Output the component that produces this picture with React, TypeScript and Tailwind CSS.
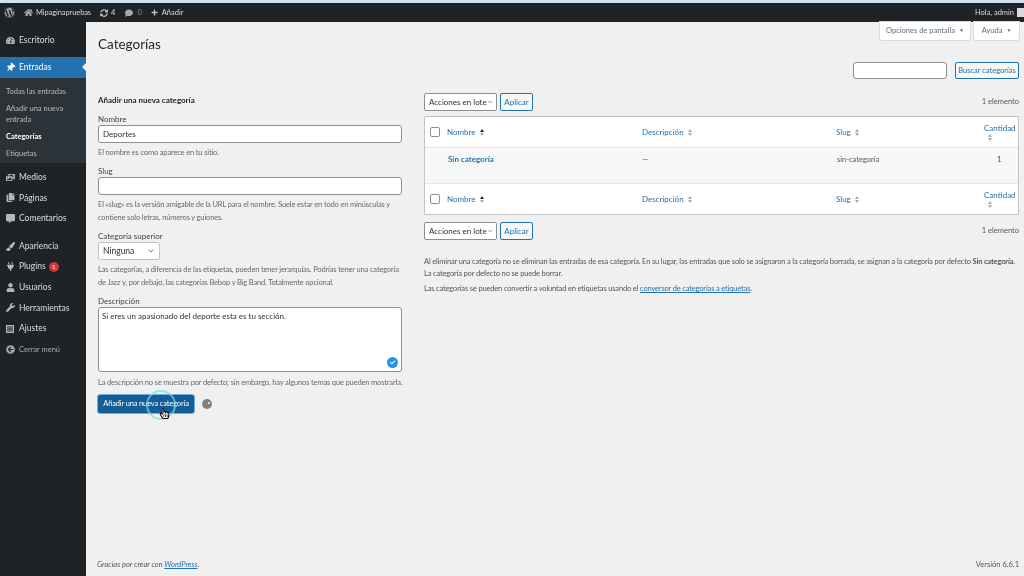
import { FaWordpress, FaHome, FaComment, FaPlus, FaTachometerAlt, FaThumbtack, FaPhotoVideo, FaCopy, FaCommentAlt, FaPaintBrush, FaPlug, FaUser, FaWrench, FaArrowCircleLeft, FaCheck, FaHandPointer, FaRegHandPointer, FaSyncAlt } from "react-icons/fa";
import { ChevronDown } from "lucide-react";
import type { ReactNode } from "react";

function SettingsIcon() {
  return (
    <svg viewBox="0 0 20 20" width="10" height="10" fill="currentColor">
      <path d="M2 2h16v16H2z" />
      <path d="M5 4h2v5H5zM5 12h2v4H5zM9 4h2v3H9zM9 10h2v6H9zM13 4h2v6h-2zM13 13h2v3h-2z" fill="#1d2327" />
      <path d="M4 9.5h4v2H4zM8 7.5h4v2H8zM12 10.5h4v2h-4z" fill="#1d2327" />
    </svg>
  );
}

const menuTop = [{ label: "Escritorio", icon: <FaTachometerAlt /> }];

const menuMiddle = [
  { label: "Medios", icon: <FaPhotoVideo /> },
  { label: "Páginas", icon: <FaCopy /> },
  { label: "Comentarios", icon: <FaCommentAlt /> },
];

const menuBottom = [
  { label: "Apariencia", icon: <FaPaintBrush /> },
  { label: "Plugins", icon: <FaPlug />, badge: "1" },
  { label: "Usuarios", icon: <FaUser /> },
  { label: "Herramientas", icon: <FaWrench /> },
  { label: "Ajustes", icon: <SettingsIcon /> },
];

function MenuItem({ label, icon, badge }: { label: string; icon: ReactNode; badge?: string }) {
  return (
    <div className="flex h-[20.6px] items-center text-[8.5px] text-[#dcdfe2]">
      <span className="flex w-[19px] justify-center pl-[1px] text-[9px] text-[#b4b7ba]">{icon}</span>
      <span>{label}</span>
      {badge && (
        <span className="ml-[3px] flex h-[10px] w-[10px] items-center justify-center rounded-full bg-[#d63638] text-[6px] text-white">
          {badge}
        </span>
      )}
    </div>
  );
}

function Sidebar() {
  return (
    <aside className="flex w-[86px] shrink-0 flex-col bg-[#1d2327] pt-[8.5px]">
      {menuTop.map((m) => (
        <MenuItem key={m.label} {...m} />
      ))}
      <div className="relative mt-[6px] flex h-[21px] items-center bg-[#2271b1] text-[8.5px] text-white">
        <span className="flex w-[19px] justify-center pl-[1px] text-[9px]">
          <FaThumbtack className="rotate-45" />
        </span>
        Entradas
        <span className="absolute right-0 top-[6px] h-0 w-0 border-y-[4px] border-r-[4px] border-y-transparent border-r-[#f0f0f1]" />
      </div>
      <div className="flex h-[85px] flex-col bg-[#2c3338] pl-[6px] pt-[7.5px] text-[7.5px] leading-[11px] text-[#b6babd]">
        <span>Todas las entradas</span>
        <span className="mt-[6px] w-[70px]">Añadir una nueva entrada</span>
        <span className="mt-[6px] font-bold text-white">Categorías</span>
        <span className="mt-[6px]">Etiquetas</span>
      </div>
      <div className="mt-[4px]">
        {menuMiddle.map((m) => (
          <MenuItem key={m.label} {...m} />
        ))}
      </div>
      <div className="mt-[7px]">
        {menuBottom.map((m) => (
          <MenuItem key={m.label} {...m} />
        ))}
      </div>
      <div className="flex h-[21px] items-center text-[7.5px] text-[#a7aaad]">
        <span className="flex w-[19px] justify-center pl-[1px] text-[9px]">
          <FaArrowCircleLeft />
        </span>
        Cerrar menú
      </div>
    </aside>
  );
}

function TopBar() {
  return (
    <header className="flex h-[19px] shrink-0 items-center bg-[#1d2327] text-[7.5px] text-[#d5d8da]">
      <FaWordpress className="ml-[4px] text-[11px] text-[#a7aaad]" />
      <FaHome className="ml-[9px] text-[9px] text-[#a7aaad]" />
      <span className="ml-[3px] tracking-[-0.1px]">Mipaginapruebas</span>
      <FaSyncAlt className="ml-[9px] text-[8px] text-[#c3c4c7]" />
      <span className="ml-[3px]">4</span>
      <FaComment className="ml-[10px] text-[8px] text-[#a7aaad]" />
      <span className="ml-[4px] text-[#8c8f94]">0</span>
      <FaPlus className="ml-[9px] text-[7px] text-[#c3c4c7]" />
      <span className="ml-[4px]">Añadir</span>
      <span className="ml-auto">Hola, admin</span>
      <span className="ml-[3px] h-[9px] w-[7px] bg-[#d8d8d8]" />
    </header>
  );
}

function Field({ label, children, help }: { label: string; children: ReactNode; help: ReactNode }) {
  return (
    <div className="mt-[6.5px] first:mt-0">
      <div className="text-[8px] leading-[12px] text-[#3c434a]">{label}</div>
      {children}
      <p className="mt-[2.5px] text-[7.5px] leading-[13px] tracking-[-0.15px] text-[#646970]">{help}</p>
    </div>
  );
}

function TextInput({ value }: { value?: string }) {
  return (
    <div className="flex h-[18px] items-center rounded-[3px] border border-[#8c8f94] bg-white px-[4px] text-[8px] text-[#2c3338]">
      {value}
    </div>
  );
}

function BulkActions() {
  return (
    <div className="flex items-center">
      <div className="flex h-[18px] w-[73px] items-center justify-between whitespace-nowrap rounded-[2px] border border-[#8c8f94] bg-white pl-[4px] pr-[3px] text-[8px] text-[#2c3338]">
        Acciones en lote
        <ChevronDown size={8} strokeWidth={2} />
      </div>
      <div className="ml-[3px] flex h-[18px] w-[33px] items-center justify-center rounded-[2px] border border-[#2271b1] bg-[#f6f7f7] text-[8px] text-[#2271b1]">
        Aplicar
      </div>
      <span className="ml-auto text-[7.5px] text-[#50575e]">1 elemento</span>
    </div>
  );
}

function SortArrows({ active }: { active?: boolean }) {
  return (
    <span className="ml-[4px] inline-flex flex-col gap-[1px]">
      <span className={`h-0 w-0 border-x-[2.5px] border-b-[3.5px] border-x-transparent ${active ? "border-b-[#1d2327]" : "border-b-[#a7aaad]"}`} />
      <span className="h-0 w-0 border-x-[2.5px] border-t-[3.5px] border-x-transparent border-t-[#a7aaad]" />
    </span>
  );
}

function HeadRow({ border }: { border: string }) {
  return (
    <div className={`grid h-[31px] grid-cols-[217px_194px_143px_1fr] items-center bg-white text-[8px] text-[#2271b1] ${border}`}>
      <div className="flex items-center pl-[5px]">
        <span className="h-[10px] w-[10px] rounded-[2px] border border-[#8c8f94] bg-white" />
        <span className="ml-[7px]">Nombre</span>
        <SortArrows active />
      </div>
      <div className="flex items-center">
        Descripción
        <SortArrows />
      </div>
      <div className="flex items-center">
        Slug
        <SortArrows />
      </div>
      <div className="flex flex-col items-start pl-[5px] leading-[11px]">
        Cantidad
        <SortArrows />
      </div>
    </div>
  );
}

function Table() {
  return (
    <div className="mt-[5px] rounded-[1px] border border-[#c3c4c7] bg-white">
      <HeadRow border="border-b border-[#e4e5e6]" />
      <div className="grid h-[35px] grid-cols-[217px_194px_143px_1fr] bg-[#f6f7f7] pt-[6px] text-[8px] leading-[11px] text-[#50575e]">
        <span className="pl-[23px] font-bold text-[#2271b1]">Sin categoría</span>
        <span>—</span>
        <span className="pl-[1px] text-[7.5px]">sin-categoría</span>
        <span className="pl-[18px]">1</span>
      </div>
      <HeadRow border="border-t border-[#e4e5e6]" />
    </div>
  );
}

function AddForm() {
  return (
    <section className="w-[304px] shrink-0 pt-[4px]">
      <h2 className="text-[8px] font-bold leading-[12px] text-[#1d2327]">Añadir una nueva categoría</h2>
      <div className="mt-[7px]">
        <Field label="Nombre" help="El nombre es como aparece en tu sitio.">
          <TextInput value="Deportes" />
        </Field>
        <Field
          label="Slug"
          help="El «slug» es la versión amigable de la URL para el nombre. Suele estar en todo en minúsculas y contiene solo letras, números y guiones."
        >
          <TextInput />
        </Field>
        <Field
          label="Categoría superior"
          help="Las categorías, a diferencia de las etiquetas, pueden tener jerarquías. Podrías tener una categoría de Jazz y, por debajo, las categorías Bebop y Big Band. Totalmente opcional."
        >
          <div className="flex h-[18px] w-[62px] items-center justify-between rounded-[2px] border border-[#c3c4c7] bg-white pl-[4px] pr-[4px] text-[8.5px] text-[#2c3338]">
            Ninguna
            <ChevronDown size={8} strokeWidth={2} />
          </div>
        </Field>
        <Field
          label="Descripción"
          help={
            <span className="whitespace-nowrap">
              La descripción no se muestra por defecto; sin embargo, hay algunos temas que pueden mostrarla.
            </span>
          }
        >
          <div className="relative mb-[4px] h-[65px] rounded-[3px] border border-[#8c8f94] bg-white px-[3px] py-[2px] text-[8px] leading-[12px] text-[#2c3338]">
            Si eres un apasionado del deporte esta es tu sección.
            <span className="absolute bottom-[3px] right-[3px] flex h-[11px] w-[11px] items-center justify-center rounded-full bg-[#2196f3] text-[5px] text-white">
              <FaCheck />
            </span>
          </div>
        </Field>
      </div>
      <div className="mt-[5px] flex items-center">
        <div className="relative -ml-[1px] flex h-[20px] w-[98px] items-center justify-center rounded-[3px] border border-[#72aee6] bg-[#135e96] text-[7.5px] tracking-[-0.15px] text-white">
          Añadir una nueva categoría
          <span className="absolute left-[48px] top-[-5px] h-[30px] w-[30px] rounded-full border-[2px] border-[#7fdcd6]/70" />
          <span className="absolute left-[61px] top-[13px] text-[11px] text-white">
            <FaHandPointer />
          </span>
          <span className="absolute left-[61px] top-[13px] text-[11px] text-black">
            <FaRegHandPointer />
          </span>
        </div>
        <span className="relative ml-[7px] h-[10px] w-[10px] rounded-full bg-[#808080]">
          <span className="absolute right-[2px] top-[3px] h-[2px] w-[2px] rounded-full bg-[#f0f0f1]" />
        </span>
      </div>
    </section>
  );
}

function Main() {
  return (
    <main className="flex min-w-0 flex-1 flex-col bg-[#f0f0f1] pl-[12px] pr-[5px]">
      <div className="flex justify-end gap-[4px]">
        <div className="flex h-[18px] w-[90px] items-center justify-center gap-[4px] rounded-b-[2px] bg-white text-[7.5px] text-[#646970] shadow-[0_0_0_1px_#dcdcde]">
          Opciones de pantalla <span className="text-[5px]">▼</span>
        </div>
        <div className="flex h-[18px] w-[45px] items-center justify-center gap-[4px] rounded-b-[2px] bg-white text-[7.5px] text-[#646970] shadow-[0_0_0_1px_#dcdcde]">
          Ayuda <span className="text-[5px]">▼</span>
        </div>
      </div>
      <h1 className="-mt-[6px] text-[13.5px] leading-[20px] text-[#1d2327]">Categorías</h1>
      <div className="mt-[8px] flex justify-end">
        <div className="h-[17px] w-[94px] rounded-[3px] border border-[#8c8f94] bg-white" />
        <div className="ml-[8px] flex h-[17px] w-[64px] items-center justify-center rounded-[2px] border border-[#2271b1] bg-[#f6f7f7] text-[7.5px] text-[#2271b1]">
          Buscar categorías
        </div>
      </div>
      <div className="mt-[11px] flex gap-[22px]">
        <AddForm />
        <section className="min-w-0 flex-1 pt-[3px]">
          <BulkActions />
          <Table />
          <div className="mt-[7px]">
            <BulkActions />
          </div>
          <div className="mt-[16px] text-[7.5px] leading-[12px] tracking-[-0.16px] text-[#50575e]">
            <p>
              Al eliminar una categoría no se eliminan las entradas de esa categoría. En su lugar, las entradas que solo se asignaron a la categoría borrada, se asignan a la categoría por defecto <strong className="font-bold">Sin categoría</strong>. La categoría por defecto no se puede borrar.
            </p>
            <p className="mt-[3px]">
              Las categorías se pueden convertir a voluntad en etiquetas usando el <span className="text-[#2271b1] underline">conversor de categorías a etiquetas</span>.
            </p>
          </div>
        </section>
      </div>
      <footer className="mt-auto -ml-[1px] flex h-[22px] items-center justify-between text-[7.5px] text-[#50575e]">
        <span className="italic">
          Gracias por crear con <span className="text-[#2271b1] underline">WordPress</span>.
        </span>
        <span>Versión 6.6.1</span>
      </footer>
    </main>
  );
}

export default function App() {
  return (
    <div className="flex h-[576px] w-[1024px] flex-col overflow-hidden bg-[#f0f0f1] font-['Lato',sans-serif] blur-[0.5px]">
      <div className="h-[3px] shrink-0 bg-[#d3e2f1]" />
      <TopBar />
      <div className="flex min-h-0 flex-1">
        <Sidebar />
        <Main />
      </div>
    </div>
  );
}
